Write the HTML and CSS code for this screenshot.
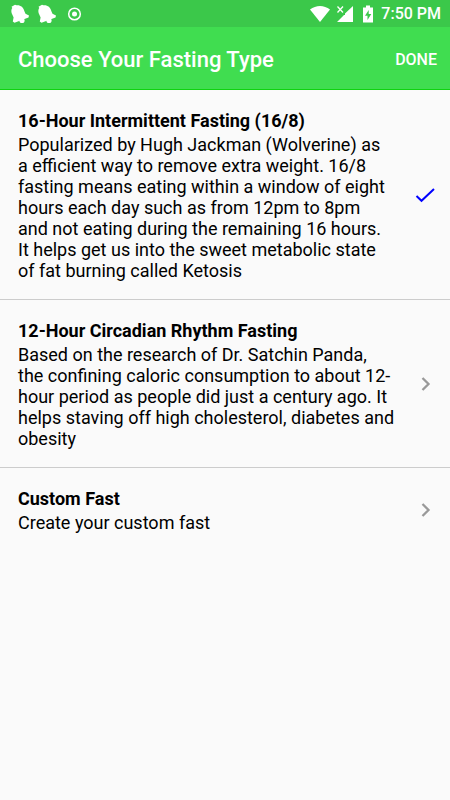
FILE: index.html
```html
<!DOCTYPE html>
<html lang="en">
<head>
<meta charset="utf-8">
<meta name="viewport" content="width=device-width, initial-scale=1">
<title>Choose Your Fasting Type</title>
<link rel="stylesheet" href="styles.css">
</head>
<body>
<div class="status">
  <div class="status-group notices">
    <svg width="20" height="20" viewBox="0 0 20 20" aria-hidden="true"><path d="M1.500 2.800 5 .8 6.500 1.200C10.500.8 13.500 3 14.300 7L15.500 9.800 19 11.500 18.500 13.500 4.500 18.800 2.800 17.500 3.600 13.500 1.600 9C1 6.500 1.500 5 2.300 4z" fill="#fff"/><circle cx="12" cy="16.500" r="2.600" fill="#fff"/></svg>
    <svg width="20" height="20" viewBox="0 0 20 20" aria-hidden="true"><path d="M1.500 2.800 5 .8 6.500 1.200C10.500.8 13.500 3 14.300 7L15.500 9.800 19 11.500 18.500 13.500 4.500 18.800 2.800 17.500 3.600 13.500 1.600 9C1 6.500 1.500 5 2.300 4z" fill="#fff"/><circle cx="12" cy="16.500" r="2.600" fill="#fff"/></svg>
    <svg width="20" height="20" viewBox="0 0 20 20" aria-hidden="true"><circle cx="10.500" cy="10" r="5.800" fill="none" stroke="#fff" stroke-width="1.500"/><circle cx="10.500" cy="10" r="2.500" fill="#fff"/></svg>
  </div>
  <div class="status-group">
    <svg width="20" height="20" viewBox="0 0 20 20" aria-hidden="true"><path d="M0 5.500C6 .8 14 .8 20 5.500L10 18z" fill="#fff"/></svg>
    <svg class="signal" width="18" height="20" viewBox="0 0 18 20" aria-hidden="true"><path d="M17 2v16H1l7-7h1V9.500z" fill="#fff"/><path d="m1.500 2.500 5.500 6m0-6-5.500 6" stroke="#fff" stroke-width="1.300"/></svg>
    <svg class="battery" width="12" height="20" viewBox="0 0 12 20" aria-hidden="true"><path fill-rule="evenodd" d="M4 1.500h4v2h3V18.500H1v-15h3zM6.700 6 3 11.800h2.500V16L9.300 10H6.700z" fill="#fff"/></svg>
    <time>7:50 PM</time>
  </div>
</div>
<header class="bar">
  <h1>Choose Your Fasting Type</h1>
  <button class="done" type="button">DONE</button>
</header>
<main>
  <button class="row" type="button" aria-pressed="true">
    <span class="text">
      <span class="name">16-Hour Intermittent Fasting (16/8)</span>
      <span class="about">Popularized by Hugh Jackman (Wolverine) as a&nbsp;efficient way to remove extra weight. 16/8 fasting means eating within a window of eight hours each day such as from 12pm to 8pm and&nbsp;not eating during the remaining 16 hours. It&nbsp;helps get us into the sweet metabolic state of&nbsp;fat burning called Ketosis</span>
    </span>
    <svg width="26" height="26" viewBox="0 0 26 26" aria-hidden="true"><path d="m4.500 13 5 4.800L22 6" fill="none" stroke="#00f" stroke-width="2"/></svg>
  </button>
  <button class="row" type="button">
    <span class="text">
      <span class="name">12-Hour Circadian Rhythm Fasting</span>
      <span class="about">Based on the research of Dr. Satchin Panda, the confining caloric consumption to about 12-hour period as people did just a century ago. It helps staving off high cholesterol, diabetes and obesity</span>
    </span>
    <svg width="26" height="26" viewBox="0 0 26 26" aria-hidden="true"><path d="m10.500 6 6 6-6 6" fill="none" stroke="#999" stroke-width="2.300"/></svg>
  </button>
  <button class="row" type="button">
    <span class="text">
      <span class="name">Custom Fast</span>
      <span class="about">Create your custom fast</span>
    </span>
    <svg width="26" height="26" viewBox="0 0 26 26" aria-hidden="true"><path d="m10.500 6 6 6-6 6" fill="none" stroke="#999" stroke-width="2.300"/></svg>
  </button>
</main>
</body>
</html>
```

FILE: styles.css
```css
* {
  box-sizing: border-box;
}

body {
  margin: 0;
  background: #fafafa;
  color: #000;
  font-family: Roboto, sans-serif;
}

button {
  border: 0;
  background: none;
  color: inherit;
  font-family: inherit;
}

svg {
  display: block;
  flex: none;
}

.status {
  display: flex;
  justify-content: space-between;
  height: 27px;
  padding: 0 9px 0 10px;
  background: #3bc84a;
  color: #fff;
}

.status-group {
  display: flex;
  align-items: center;
  font-size: 16px;
  font-weight: 500;
  line-height: 20px;
}

.notices {
  gap: 7px;
}

.signal {
  margin-left: 6px;
}

.battery {
  margin: 0 7px 0 8px;
}

.bar {
  display: flex;
  align-items: center;
  justify-content: space-between;
  min-height: 63px;
  padding: 4px 13px 0 18px;
  border-bottom: 1px solid #0fd30f;
  background: #40dd50;
  color: #fff;
}

h1 {
  margin: 0;
  font-size: 22px;
  font-weight: 500;
  line-height: 28px;
}

.done {
  padding: 0;
  font-size: 16px;
  font-weight: 500;
  line-height: 20px;
}

.row {
  display: flex;
  align-items: center;
  gap: 17px;
  width: 100%;
  padding: 20px 12px 18px 18px;
  font-size: 18px;
  line-height: 21px;
  text-align: left;
}

.row + .row {
  border-top: 1px solid #ccc;
}

.text {
  flex: 1;
}

.name,
.about {
  display: block;
}

.name {
  margin-bottom: 3px;
  font-weight: 700;
}
```
